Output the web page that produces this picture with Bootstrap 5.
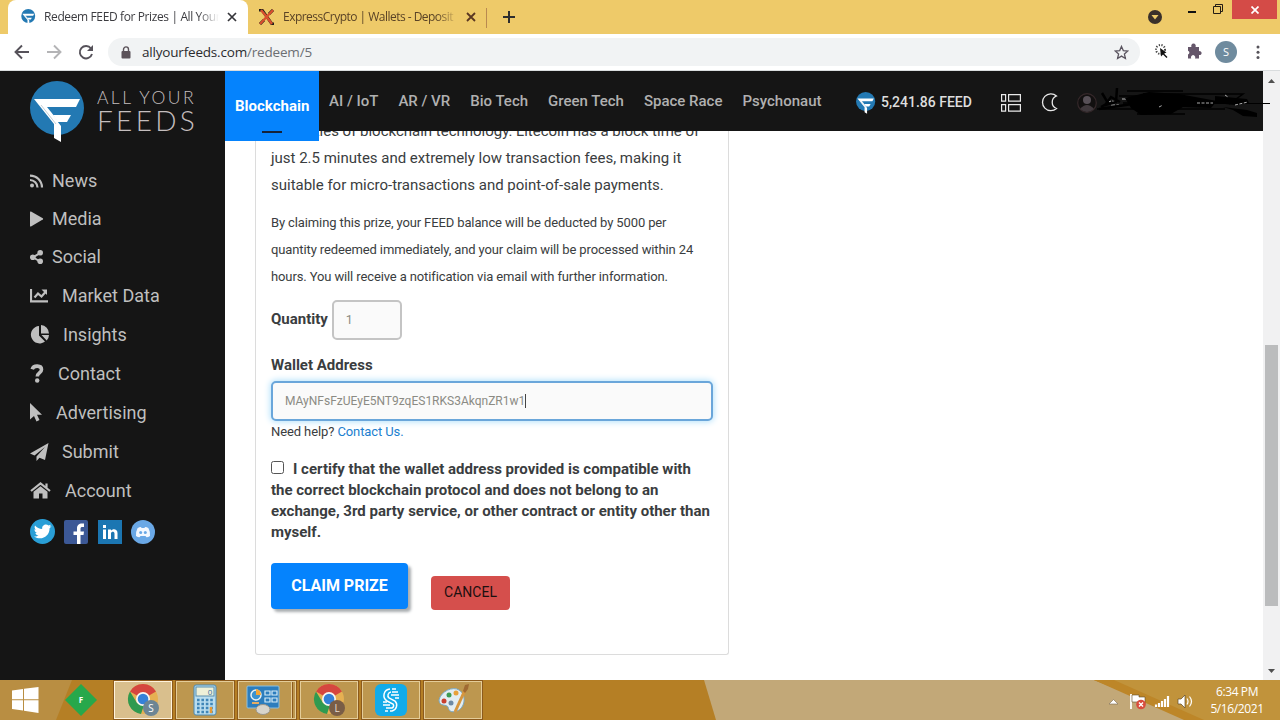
<!DOCTYPE html>
<html lang="en">
<head>
  <meta charset="UTF-8">
  <meta name="viewport" content="width=device-width, initial-scale=1.0">
  <title>Redeem FEED for Prizes | All Your Feeds</title>
  <link href="https://cdn.jsdelivr.net/npm/bootstrap@5.3.0/dist/css/bootstrap.min.css" rel="stylesheet">
  <style>
    body { width: 1280px; height: 720px; overflow: hidden; font-family: Roboto, "Liberation Sans", sans-serif; color: #3a3d40; background: #fff; }
    svg { display: block; flex: none; }
    .ui-font { font-family: "Open Sans", "Noto Sans", sans-serif; }

    /* browser chrome */
    .tabstrip { height: 34px; background: #eeca69; }
    .tab-on { width: 240px; height: 34px; margin-left: 8px; background: #fff; border-radius: 8px 8px 0 0; padding: 0 11px 0 13px; }
    .tab-off { width: 238px; height: 34px; padding: 0 10px 0 10px; }
    .tab-text { font-size: 12px; letter-spacing: -.38px; line-height: 34px; overflow: hidden; white-space: nowrap; color: #3c3c40; -webkit-mask-image: linear-gradient(90deg, #000 88%, transparent); mask-image: linear-gradient(90deg, #000 88%, transparent); }
    .tab-off .tab-text { letter-spacing: -.52px; color: #5a4326; }
    .tab-sep { width: 1px; height: 20px; background: #b98a50; }
    .win-close { width: 45px; height: 19px; background: #d44b47; }
    .toolbar { height: 37px; border-bottom: 1px solid #d9dcde; }
    .omnibox { width: 1032px; height: 28px; border-radius: 14px; background: #f1f3f4; margin-left: 14px; padding: 0 11px 0 13px; color: #2b2b2e; }
    .url { font-size: 13.5px; letter-spacing: -.19px; margin-left: 11px; }
    .url .path { color: #6c6f73; }
    .who { width: 22px; height: 22px; border-radius: 50%; background: #6f8b9e; color: #fff; font-size: 11px; line-height: 22px; margin: 0 18px 0 8px; }

    /* sidebar */
    .viewport { height: 609px; }
    .sidebar { width: 225px; background: #151515; padding-left: 30px; color: #bfbfbf; }
    .side-logo { height: 90px; padding-top: 10px; }
    .logo-words { font-family: Lato, sans-serif; font-weight: 300; color: #c4bebe; padding: 4px 0 0 11px; }
    .logo-words .l1 { font-size: 17.5px; line-height: 25px; letter-spacing: 2.4px; white-space: nowrap; }
    .logo-words .l2 { font-size: 28px; line-height: 20px; letter-spacing: 3.3px; }
    .side-link { height: 39px; font-size: 18px; color: #bfbfbf; fill: #bfbfbf; }
    .side-link.tight { height: 38px; }
    .side-link.tight svg { margin-top: 2px; }
    .side-link.tight + .side-link:not(.tight) { margin-top: 1px; }
    .socials { gap: 9px; padding-top: 9px; }

    /* top navigation */
    .topnav { height: 60px; background: #151515; z-index: 2; }
    .topnav .nav-link { padding: 0 10px; height: 60px; line-height: 60px; font-size: 15px; font-weight: 500; color: #b0b0b0; white-space: nowrap; }
    .topnav .nav-link.active { position: relative; width: 94px; height: 70px; line-height: 70px; background: #0583fd; color: #fff; font-weight: 700; }
    .topnav .nav-link.active::after { content: ""; position: absolute; left: 37px; bottom: 8px; width: 20px; height: 2px; background: #152238; }
    .nav-tools { width: 407px; padding-top: 3px; }
    .feed-total { font-size: 14px; font-weight: 500; color: #dedede; margin-left: 5px; width: 120px; white-space: nowrap; }
    .scribble { position: absolute; left: 850px; top: 10px; z-index: 3; }

    /* redeem card */
    .content { overflow: hidden; }
    .prize { width: 474px; height: 538px; margin: -14px 0 0 30px; padding: 1px 15px 0; border: 1px solid #dcdcdc; border-top: 0; border-radius: 0 0 3px 3px; white-space: nowrap; }
    .desc { font-size: 15px; line-height: 27px; letter-spacing: -.01px; margin-bottom: 10px; }
    .fine { font-size: 13px; line-height: 27px; letter-spacing: -.12px; margin-bottom: 10px; }
    .fw-label { font-size: 15px; font-weight: 700; line-height: 21px; position: relative; top: -1px; }
    .field { height: 40px; border: 2px solid #c4c4c4; border-radius: 5px; background: #fafafa; color: #8b8b84; font-size: 12px; padding: 0 12px; }
    .field.focused { border-color: #6aa6da; box-shadow: 0 0 6px 1px #b5e2fb; }
    .field.qty { width: 70px; font-size: 12.5px; }
    .caret { width: 1px; height: 14px; background: #444; }
    .help { font-size: 13px; line-height: 21px; letter-spacing: -.1px; }
    .help a { color: #1b80cf; text-decoration: none; }
    .certify { font-size: 15px; line-height: 21px; font-weight: 700; margin-top: 17px; }
    .tick { display: inline-block; width: 13px; height: 13px; border: 1px solid #555; border-radius: 2.5px; margin-right: 9px; }
    .actions { margin-top: 20px; }
    .btn-claim { width: 137px; height: 46px; border-radius: 4px; background: #0583fd; color: #fff; font-size: 16px; font-weight: 700; box-shadow: 3px 3px 3px #a9adb0; }
    .btn-cancel { width: 79px; height: 34px; border-radius: 4px; background: #d54f4c; color: #1c1010; font-size: 14px; font-weight: 400; margin: 13px 0 0 23px; }
    .btn-claim, .btn-cancel { padding: 0 0 1px; border: 0; }

    /* scrollbar */
    .sbar { width: 17px; background: #f1f1f2; padding: 7px 0 6px; }
    .thumb { width: 13px; height: 261px; margin-top: 261px; background: #bbbcbd; }

    /* taskbar */
    .taskbar { height: 40px; background: #b57f25; position: relative; }
    .wall { position: absolute; left: 0; top: 0; }
    .taskbar > div { position: relative; }
    .task { width: 58px; height: 38px; border: 1px solid #e4cc98; background: #bd974f; outline: 1px solid #8c5a1c; }
    .task.on { background: #d9bf8d; border-color: #fff3dc; }
    .clock { font-size: 12px; line-height: 17px; letter-spacing: -.4px; color: #fff; width: 86px; }
  </style>
</head>
<body class="d-flex flex-column">

  <svg width="0" height="0" class="position-absolute">
    <defs>
      <symbol id="feed" viewBox="0 0 56 62">
        <circle cx="27" cy="27" r="27" fill="#2379b3"/>
        <path d="M4 18h46l-4 8H16l15 19v16l-7-4V43z" fill="#fff"/>
        <path d="M23 34h18l-4 7h-9z" fill="#fff"/>
        <path d="M16 26l12 15" stroke="#fff" stroke-width="1.500"/>
        <path d="M11 24l15 19" stroke="#c5cfd6" stroke-width="1"/>
      </symbol>
      <symbol id="chrome" viewBox="0 0 32 32">
        <circle cx="16" cy="16" r="15" fill="#e6b052"/>
        <path d="M16 16L3 8.500A15 15 0 0 1 29 8.500z" fill="#d5463f"/>
        <path d="M3 8.500L10 20l7 2-3 9A15 15 0 0 1 3 8.500z" fill="#2f9a50"/>
        <circle cx="16" cy="16" r="7" fill="#f7f7f2"/>
        <circle cx="16" cy="16" r="5.300" fill="#3481d8"/>
      </symbol>
    </defs>
  </svg>

  <!-- tabs -->
  <div class="tabstrip d-flex ui-font">
    <div class="tab-on d-flex align-items-center">
      <svg width="15" height="16"><use href="#feed"/></svg>
      <div class="tab-text flex-grow-1 ms-2 me-2" style="width:174px">Redeem FEED for Prizes | All Your</div>
      <svg width="10" height="10" viewBox="0 0 10 10"><path d="M1 1l8 8M9 1L1 9" stroke="#35353a" stroke-width="1.700"/></svg>
    </div>
    <div class="tab-off d-flex align-items-center">
      <svg width="17" height="16" viewBox="0 0 17 16"><path d="M1 1h3l10 14h2M15 1l-4 4M6 11l-4 4" stroke="#22201c" stroke-width="3" fill="none"/><path d="M15 1L2 15M3 1l5 6 6 8" stroke="#d9502e" stroke-width="2.400" fill="none"/></svg>
      <div class="tab-text flex-grow-1 ms-2 me-2" style="width:176px">ExpressCrypto | Wallets - Deposit</div>
      <svg width="10" height="10" viewBox="0 0 10 10"><path d="M1 1l8 8M9 1L1 9" stroke="#5a3722" stroke-width="1.800"/></svg>
    </div>
    <div class="tab-sep mt-2"></div>
    <svg class="ms-3" width="13" height="34" viewBox="0 0 13 34"><path d="M0 17h12M6 11v12" stroke="#2e2e2e" stroke-width="2"/></svg>
    <div class="d-flex ms-auto">
      <svg width="84" height="34" viewBox="0 0 84 34"><circle cx="7" cy="17" r="7" fill="#3a302a"/><path d="M3.500 15h7L7 19.500z" fill="#eeca69"/><path d="M40 12h8" stroke="#111" stroke-width="2"/><path d="M65.500 6.500h7v7h-7zM67.500 6V4.500h7v7H73" fill="none" stroke="#241d14"/></svg>
      <div class="win-close d-flex justify-content-center align-items-center" style="margin-right:3px"><svg width="8" height="8" viewBox="0 0 8 8"><path d="M.5 .5l7 7M7.500 .5l-7 7" stroke="#fff" stroke-width="1.700"/></svg></div>
    </div>
  </div>

  <!-- address bar -->
  <div class="toolbar d-flex align-items-center ui-font">
    <svg width="94" height="36" viewBox="0 0 94 36" fill="none" stroke-width="1.900">
      <path d="M29 18H16M22 11.500L15.500 18l6.500 6.500" stroke="#56525a"/>
      <path d="M47 18h13M54 11.500l6.500 6.500-6.500 6.500" stroke="#b4b4b6"/>
      <path d="M91 14.500A6.200 6.200 0 1 0 92 20" stroke="#56525a"/><path d="M93 11v6h-6z" fill="#56525a"/>
    </svg>
    <div class="omnibox d-flex align-items-center">
      <svg width="10" height="13" viewBox="0 0 10 13"><rect x="0.500" y="5" width="9" height="7.500" rx="1" fill="#5b5259"/><path d="M2.500 5V3.400a2.500 2.500 0 0 1 5 0V5" fill="none" stroke="#5b5259" stroke-width="1.400"/></svg>
      <span class="url">allyourfeeds.com<span class="path">/redeem/5</span></span>
      <svg class="ms-auto" width="15" height="15" viewBox="0 0 15 15"><path d="M7.500 1.400l1.800 4.200 4.500.4-3.400 3 1 4.500-3.900-2.400-3.900 2.400 1-4.500-3.400-3 4.500-.4z" fill="none" stroke="#5b5560" stroke-width="1.300"/></svg>
    </div>
    <svg class="ms-auto" width="60" height="30" viewBox="0 0 60 30"><circle cx="13.500" cy="12.500" r="4.500" fill="none" stroke="#444" stroke-width="2" stroke-dasharray="1.200 1.500"/><path d="M13 11l1 8.500 2-2 3.500 3.500 1-1-3.500-3.500 2.500-1z" fill="#111"/><path d="M41 10h3.500a2.300 2.300 0 1 1 4 0H52v4.200a2 2 0 1 1 0 3.800v3.500h-4a2.200 2.200 0 1 0-3.800 0H41v-4a2 2 0 0 0 0-3.800z" fill="#65566a"/></svg>
    <div class="who text-center">S</div>
    <svg width="6" height="16" viewBox="0 0 6 16" fill="#56535a" style="margin-right:19px"><circle cx="3" cy="3" r="1.500"/><circle cx="3" cy="8.200" r="1.500"/><circle cx="3" cy="13.400" r="1.500"/></svg>
  </div>

  <div class="viewport d-flex">
    <!-- sidebar -->
    <nav class="sidebar">
      <div class="side-logo d-flex">
        <svg width="56" height="62"><use href="#feed"/></svg>
        <div class="logo-words"><div class="l1">ALL YOUR</div><div class="l2">FEEDS</div></div>
      </div>
      <div class="side-link tight d-flex align-items-center"><svg width="22" height="14" viewBox="0 0 22 14"><circle cx="2" cy="11.500" r="2"/><path d="M0 6a7.500 7.500 0 0 1 7.500 7.500M0 1.600A11.900 11.900 0 0 1 12 13.500" fill="none" stroke="#bfbfbf" stroke-width="2.200"/></svg>News</div>
      <div class="side-link tight d-flex align-items-center"><svg width="22" height="16" viewBox="0 0 22 16"><path d="M0 1.500q0-1.300 1-.9l11.800 6.700q.8.700 0 1.300L1 15.500q-1 .4-1-.8z"/></svg>Media</div>
      <div class="side-link tight d-flex align-items-center"><svg width="22" height="14" viewBox="0 0 22 14"><circle cx="2.800" cy="7.300" r="2.800"/><circle cx="10.200" cy="2.800" r="2.800"/><circle cx="10.200" cy="11.200" r="2.800"/><path d="M10 3L3 7.300l7 4.200" fill="none" stroke="#bfbfbf" stroke-width="2"/></svg>Social</div>
      <div class="side-link d-flex align-items-center"><svg width="32" height="15" viewBox="0 0 32 15"><path d="M1 1v12.300h17M4.500 9.500L8 5.500l3.500 3L15.500 4" fill="none" stroke="#bfbfbf" stroke-width="2.200"/><path d="M11.500 1.500H17V7z"/></svg>Market Data</div>
      <div class="side-link d-flex align-items-center"><svg width="33" height="19" viewBox="0 0 33 19"><path d="M9 1v9.500l6 6A8.700 8.700 0 1 1 9 1z"/><path d="M11 0a8.500 8.500 0 0 1 8 8.500h-8zM11.500 10H19a8.500 8.500 0 0 1-2.300 5.500z"/></svg>Insights</div>
      <div class="side-link d-flex align-items-center"><svg width="28" height="19" viewBox="0 0 28 19"><path d="M2.200 5.200C3.500 1 11.500 1.200 11.500 5.500c0 3.600-4.200 3.200-4.200 7" fill="none" stroke="#bfbfbf" stroke-width="3.600"/><circle cx="7.200" cy="16.500" r="2.200"/></svg>Contact</div>
      <div class="side-link d-flex align-items-center"><svg width="26" height="19" viewBox="0 0 26 19"><path d="M0 0v16.500l4-3.500 2.500 5.500 3-1.400L7 11.700h5z"/></svg>Advertising</div>
      <div class="side-link d-flex align-items-center"><svg width="32" height="18" viewBox="0 0 32 18"><path d="M18.500 0L0 10.500l4.500 2L15 4 6.500 13.500V18l3-3.300 5.500 2.300z"/></svg>Submit</div>
      <div class="side-link d-flex align-items-center"><svg width="35" height="17" viewBox="0 0 35 17"><path d="M1 9l9.500-7.500L20 9M16.500 1.500v5" fill="none" stroke="#bfbfbf" stroke-width="2.200"/><path d="M3.500 9.800l7-5.500 7 5.500V16.500h-5v-5H9v5H3.500z"/></svg>Account</div>
      <div class="socials d-flex align-items-center">
        <svg width="25" height="25" viewBox="0 0 25 25"><circle cx="12.500" cy="12.500" r="12.500" fill="#299ed6"/><path d="M4 17.500c2 .2 3.500-.3 4.500-1.200-1.700-.2-2.700-1-3.100-2.400h1.500C5.300 13.200 4.500 12 4.500 10.300l1.400.4C4.500 9.500 4.300 7.900 5 6.400c2 2.300 4.300 3.400 7.200 3.600-.5-4 4-5.600 6.300-3.400l2.400-.8-1.300 2 2-.5-2 2C19.500 18 11 22 4 17.500z" fill="#fff"/></svg>
        <svg width="25" height="24" viewBox="0 0 25 24"><rect width="24" height="24" rx="2" fill="#3c5896"/><path d="M13 24v-9h-3.500v-3.500H13V8.500C13 5 15 3.500 18 3.500h2V7h-1.500C17 7 16.500 7.500 16.500 8.700v2.800H20l-.5 3.500h-3v9z" fill="#fff"/></svg>
        <svg width="24" height="24" viewBox="0 0 24 24"><rect width="24" height="24" fill="#1b76b2"/><path d="M5 9.500h3V19H5zM5 5h3v3H5zM10 9.500h3v1.300c1.700-2.400 6.500-2 6.500 2.200v6h-3v-5.500c0-2.300-3.500-2.200-3.500 0V19h-3z" fill="#fff"/></svg>
        <svg width="24" height="24" viewBox="0 0 24 24"><circle cx="12" cy="12" r="12" fill="#6aa8e6"/><path d="M6.500 8.200q2-1.300 3.500-1.200l.5 1h3l.5-1q2 0 3.500 1.200Q19.500 12 19 16q-2 1.400-3.500 1.300L14.500 16h-5l-1 1.300Q7 17.400 5 16 4.500 12 6.500 8.200z" fill="#f4f8ff"/><circle cx="9.700" cy="12.500" r="1.500" fill="#6aa8e6"/><circle cx="14.300" cy="12.500" r="1.500" fill="#6aa8e6"/></svg>
      </div>
    </nav>

    <!-- page -->
    <main class="flex-grow-1 d-flex flex-column position-relative">
      <div class="topnav d-flex">
        <a class="nav-link active">Blockchain</a>
        <a class="nav-link">AI / IoT</a>
        <a class="nav-link">AR / VR</a>
        <a class="nav-link">Bio Tech</a>
        <a class="nav-link">Green Tech</a>
        <a class="nav-link">Space Race</a>
        <a class="nav-link">Psychonaut</a>
        <div class="nav-tools d-flex align-items-center ms-auto">
          <svg width="20" height="22"><use href="#feed"/></svg>
          <span class="feed-total">5,241.86 FEED</span>
          <svg width="20" height="18" viewBox="0 0 20 18" fill="none" stroke="#e8e8e8" stroke-width="1.200"><path d="M.6 .6h4v6.500h-4zM7.600 .6h11.800v6.500H7.600zM.6 10.600h4v6.500h-4zM7.600 10.600h11.800v6.500H7.600z"/></svg>
          <svg style="margin-left:19px" width="18" height="19" viewBox="0 0 17 19"><path d="M16 3A8.400 8.400 0 1 0 16 15.500 6.700 6.700 0 0 1 16 3z" fill="none" stroke="#e8e8e8" stroke-width="1.300"/></svg>
          <svg style="margin-left:19px" width="20" height="20" viewBox="0 0 20 20"><circle cx="10" cy="10" r="9.300" fill="#121010" stroke="#35282a" stroke-width="1.200"/><circle cx="10" cy="7" r="4" fill="#575057"/><path d="M3 16q7-8 14 0-7 6-14 0z" fill="#40393d"/></svg>
        </div>
      </div>
      <svg class="scribble" width="200" height="40" viewBox="0 0 200 40">
        <path d="M32 22q5-4 9 0M47 18h12M36 24h8" stroke="#b9b9b9" stroke-width="1.200" stroke-dasharray="4 1.500" fill="none"/>
        <path d="M27 12l6 10-7 4M42 7l-1 14-11 3 6-8 9 5M24 28l40-6" stroke="#000" stroke-width="2.500" fill="none"/>
        <path d="M52 10h56M68 13h100l-14 10M48 22h120M60 28h90M62 33h48M22 28h50M44 15h30" stroke="#000" stroke-width="1.500" fill="none"/>
        <path d="M50 17l24-6 30 2 38 7-6 7-28-1-12 7-30 1-10-7z" fill="#000"/>
        <path d="M140 15l32 3 2 4-14 2-20-2zM148 26l24 3 10 3v4l-14-1-10-6z" fill="#000"/>
        <path d="M120 22.500h75" stroke="#000"/>
        <path d="M84 26l4-2M122 22h16M150 14l3 2M160 24l13-3" stroke="#a9a9a9" stroke-width="1" stroke-dasharray="3 1.500" fill="none"/>
      </svg>
      <div class="content flex-grow-1">
        <div class="prize">
          <p class="desc">properties of blockchain technology. Litecoin has a block time of<br>just 2.5 minutes and extremely low transaction fees, making it<br>suitable for micro-transactions and point-of-sale payments.</p>
          <p class="fine">By claiming this prize, your FEED balance will be deducted by 5000 per<br>quantity redeemed immediately, and your claim will be processed within 24<br>hours. You will receive a notification via email with further information.</p>
          <div class="d-flex align-items-center">
            <label class="fw-label me-1">Quantity</label>
            <div class="field qty d-flex align-items-center">1</div>
          </div>
          <label class="fw-label d-block mt-3">Wallet Address</label>
          <div class="field focused d-flex align-items-center mt-1">MAyNFsFzUEyE5NT9zqES1RKS3AkqnZR1w1<span class="caret"></span></div>
          <div class="help">Need help? <a href="#">Contact Us.</a></div>
          <div class="certify"><span class="tick"></span>I certify that the wallet address provided is compatible with<br>the correct blockchain protocol and does not belong to an<br>exchange, 3rd party service, or other contract or entity other than<br>myself.</div>
          <div class="actions d-flex">
            <button class="btn btn-claim">CLAIM PRIZE</button>
            <button class="btn btn-cancel">CANCEL</button>
          </div>
        </div>
      </div>
    </main>

    <div class="sbar d-flex flex-column align-items-center">
      <svg width="7" height="6" viewBox="0 0 7 6"><path d="M0 5l3.500-4L7 5z" fill="#505050"/></svg>
      <div class="thumb"></div>
      <svg class="mt-auto" width="7" height="5" viewBox="0 0 7 5"><path d="M0 0h7L3.500 4z" fill="#505050"/></svg>
    </div>
  </div>

  <!-- taskbar -->
  <div class="taskbar d-flex ui-font">
    <svg class="wall" width="1280" height="40"><path d="M0 0h1280v40H0z" fill="#b57f25"/><path d="M0 0h72L56 40H0z" fill="#b98e42"/><path d="M704 0h390q60 24 100 40H716z" fill="#c2a878"/><path d="M1094 0h186v40h-86q-60-28-100-40z" fill="#c1933b"/><path d="M1094 0h20l90 40h-20z" fill="#bd8628"/></svg>
    <div class="d-flex align-items-center" style="width:113px;padding-left:12px">
      <svg width="27" height="26" viewBox="0 0 27 26" fill="#fff"><path d="M0 3.500L11 2v10.300H0zM12 1.800L26.500 0v12.300H12zM0 13.300h11v10.200L0 22zM12 13.300h14.500V26L12 23.800z"/></svg>
      <svg style="margin-left:26px" width="32" height="32" viewBox="0 0 32 32"><path d="M16 0l16 16-16 16L0 16z" fill="#27a84b"/><text x="16" y="19" font-size="8" font-weight="700" fill="#fff" text-anchor="middle">F</text></svg>
    </div>
    <div class="d-flex align-items-center" style="gap:4px;margin-left:1px">
      <div class="task on d-flex align-items-center justify-content-center"><svg width="32" height="34" viewBox="0 0 32 34"><use href="#chrome" width="32" height="32"/><circle cx="24" cy="25" r="8" fill="#6d8594"/><text x="24" y="29" font-size="10" fill="#fff" text-anchor="middle">S</text></svg></div>
      <div class="task d-flex align-items-center justify-content-center"><svg width="24" height="32" viewBox="0 0 24 32"><rect x="1" y="1" width="22" height="30" rx="2" fill="#b9ddef" stroke="#4b89b2"/><rect x="3" y="3" width="18" height="9" fill="#eef0d8" stroke="#5b8fae"/><text x="17" y="11" font-size="8" fill="#3770a0" text-anchor="middle">0</text><path d="M4 16h16M4 20h16M4 24h16M4 28h16" stroke="#3f86b8" stroke-width="2.400" stroke-dasharray="2.600 1.800"/><path d="M18 23v6" stroke="#e69a37" stroke-width="2.500"/></svg></div>
      <div class="task d-flex align-items-center justify-content-center pe-2"><svg width="34" height="30" viewBox="0 0 34 30"><rect x="1" y="1" width="32" height="22" rx="1" fill="#2c7dbd" stroke="#8cc0df"/><circle cx="10" cy="10" r="5" fill="#3b93d0" stroke="#e9f2f5" stroke-width="1.500"/><path d="M10 10V4a6 6 0 0 1 5 6z" fill="#f2a638"/><path d="M19 6h5v4h-5zM26 6h5v4h-5zM19 13h5v4h-5zM26 13h5v4h-5z" fill="none" stroke="#d6edf8" stroke-width="1.200"/><path d="M6 18h7" stroke="#e4ad64" stroke-width="2"/><ellipse cx="17" cy="24.500" rx="7" ry="5" fill="#d8d4cb" stroke="#9a958a"/></svg><svg class="position-absolute" style="left:177px;top:2px" width="3" height="36"><path d="M.5 0v36" stroke="#e4cc98"/><path d="M1.500 0v36" stroke="#8c5a1c"/></svg></div>
      <div class="task d-flex align-items-center justify-content-center"><svg width="32" height="34" viewBox="0 0 32 34"><use href="#chrome" width="32" height="32"/><circle cx="24" cy="25" r="8" fill="#795d46"/><text x="24" y="29" font-size="10" fill="#e9ddcf" text-anchor="middle">L</text></svg></div>
      <div class="task d-flex align-items-center justify-content-center"><svg width="32" height="32" viewBox="0 0 32 32"><rect width="32" height="32" rx="6" fill="#12abe9"/><g fill="none" stroke="#fff" stroke-width="1.500"><path d="M15 5a6.500 6.500 0 0 0-3 12l6 3a2.500 2.500 0 0 1-1 4h-6"/><path d="M16 8a3.500 3.500 0 0 0-2 6l6 3a6 6 0 0 1-3 10h-2"/><path d="M17 5h4M17 8h6M16 11h8M20 14h4M8 18h4M8 21h7M10 27h3"/></g></svg></div>
      <div class="task d-flex align-items-center justify-content-center"><svg width="34" height="32" viewBox="0 0 34 32"><path d="M3 16C5 7 17 2 23 6c8 5 6 18-2 21-6 2-8 0-9-4-1-3-9 0-9-7z" fill="#e3edf2" stroke="#79a8c4"/><circle cx="8" cy="17" r="2.500" fill="#c9402f"/><circle cx="13" cy="11" r="2.500" fill="#3c9b52"/><circle cx="20" cy="9" r="2.500" fill="#e8a13b"/><circle cx="15" cy="19" r="2.500" fill="#6d8aa5"/><path d="M19 28L29 6" stroke="#d7963d" stroke-width="3"/><path d="M27 7l2-6 4-1-1 5-3 4z" fill="#a06a32"/></svg></div>
    </div>
    <div class="d-flex align-items-center ms-auto">
      <svg class="mt-1" width="85" height="18" viewBox="0 0 85 18">
        <path d="M0 11l4.500-4.500L9 11z" fill="#fff" stroke="#7b6a50" stroke-width=".6"/>
        <path d="M22 1v15" stroke="#fff" stroke-width="1.800"/><path d="M23 2h7v2h6v7h-5.500V9H23z" fill="#fff" stroke="#5e4a2a" stroke-width=".6"/><circle cx="32" cy="11.500" r="4.800" fill="#d94c3d"/><path d="M30 9.500l4 4M34 9.500l-4 4" stroke="#fff" stroke-width="1.400"/>
        <path d="M47 14v-2.500M50 14v-4M53 14V8M56 14V6M59 14V3" stroke="#fff" stroke-width="2.200"/>
        <path d="M69 6h3l4-4v13l-4-4h-3z" fill="#fff" stroke="#5e4a2a" stroke-width=".7"/><path d="M78 5.500q2 3 0 6M80.500 3.500q4 5 0 10" fill="none" stroke="#fff" stroke-width="1.200"/>
      </svg>
      <div class="clock text-center">6:34 PM<br>5/16/2021</div>
    </div>
  </div>

  <script src="https://cdn.jsdelivr.net/npm/bootstrap@5.3.0/dist/js/bootstrap.bundle.min.js"></script>
</body>
</html>
